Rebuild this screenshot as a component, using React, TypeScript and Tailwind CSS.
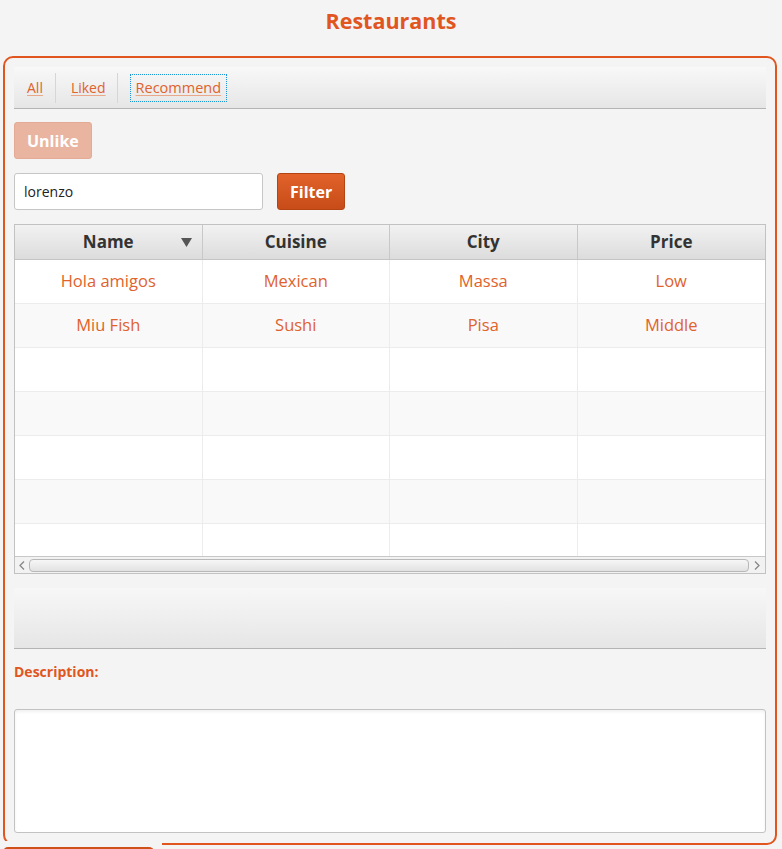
import React from 'react';

const font = { fontFamily: '"Open Sans", "Noto Sans", sans-serif' };

type Row = { name: string; cuisine: string; city: string; price: string };

const rows: Row[] = [
    { name: 'Hola amigos', cuisine: 'Mexican', city: 'Massa', price: 'Low' },
    { name: 'Miu Fish', cuisine: 'Sushi', city: 'Pisa', price: 'Middle' },
];

const columns = ['Name', 'Cuisine', 'City', 'Price'];

const Tabs: React.FC = () => (
    <div className="h-[42px] flex items-center px-[10px] bg-gradient-to-b from-[#f8f8f8] to-[#e6e6e6] border-b border-[#b4b4b4]">
        <button className="px-[3px] text-[14px] text-[#e0622c] underline underline-offset-2 decoration-[#eaa88a]">All</button>
        <div className="ml-[9px] mr-[10px] w-px h-[30px] bg-[#d6d6d6]" />
        <button className="px-[5px] text-[14px] text-[#e0622c] underline underline-offset-2 decoration-[#eaa88a]">Liked</button>
        <div className="ml-[6px] mr-[12px] w-px h-[30px] bg-[#d6d6d6]" />
        <button className="h-[28px] px-[5px] text-[14.5px] text-[#e0622c] underline underline-offset-2 decoration-[#eaa88a] border border-dotted border-[#1c95d8]">
            Recommend
        </button>
    </div>
);

const Table: React.FC = () => {
    const empty = Array.from({ length: 5 }, () => null);
    return (
        <div className="h-[350px] flex flex-col border border-[#c2c2c2] bg-white">
            <div className="h-[35px] grid grid-cols-4 bg-gradient-to-b from-[#f2f2f2] to-[#dcdcdc] border-b border-[#c4c4c4]">
                {columns.map((c, i) => (
                    <div key={c} className={`relative flex items-center justify-center text-[17px] font-bold text-[#333] ${i < 3 ? 'border-r border-[#c8c8c8]' : ''}`}>
                        {c}
                        {i === 0 && (
                            <svg className="absolute right-[10px] top-[13px]" width="11" height="9" viewBox="0 0 11 9">
                                <path d="M0 0 H11 L5.5 9 Z" fill="#555" />
                            </svg>
                        )}
                    </div>
                ))}
            </div>
            <div className="flex-1 overflow-hidden">
                {rows.map((r, i) => (
                    <div key={r.name} className={`h-[44px] grid grid-cols-4 border-b border-[#ececec] ${i % 2 ? 'bg-[#f9f9f9]' : 'bg-white'}`}>
                        {[r.name, r.cuisine, r.city, r.price].map((v, j) => (
                            <div key={j} className={`flex items-center justify-center text-[16.5px] text-[#e0622c] ${j < 3 ? 'border-r border-[#ececec]' : ''}`}>
                                {v}
                            </div>
                        ))}
                    </div>
                ))}
                {empty.map((_, i) => (
                    <div key={i} className={`h-[44px] grid grid-cols-4 border-b border-[#ececec] ${(i + rows.length) % 2 ? 'bg-[#f9f9f9]' : 'bg-white'}`}>
                        {[0, 1, 2, 3].map((j) => (
                            <div key={j} className={j < 3 ? 'border-r border-[#ececec]' : ''} />
                        ))}
                    </div>
                ))}
            </div>
            <div className="h-[17px] flex items-center bg-[#f2f2f2] border-t border-[#c8c8c8]">
                <svg className="mx-[4px]" width="6" height="9" viewBox="0 0 6 9">
                    <path d="M5 0.5 L1 4.5 L5 8.5" stroke="#888" strokeWidth="1.3" fill="none" />
                </svg>
                <div className="flex-1 h-[13px] rounded-[4px] border border-[#b8b8b8] bg-gradient-to-b from-[#f6f6f6] to-[#e2e2e2]" />
                <svg className="mx-[5px]" width="6" height="9" viewBox="0 0 6 9">
                    <path d="M1 0.5 L5 4.5 L1 8.5" stroke="#888" strokeWidth="1.3" fill="none" />
                </svg>
            </div>
        </div>
    );
};

const App: React.FC = () => {
    return (
        <div className="relative h-[849px] overflow-hidden bg-[#f4f4f4]" style={font}>
            <div className="h-[56px] flex items-start justify-center pt-[5px]">
                <h1 className="text-[21.5px] font-bold text-[#e0561e]">Restaurants</h1>
            </div>
            <div className="ml-[3px] w-[774px] h-[789px] rounded-[10px] border-2 border-[#e0561e] px-[9px] pt-[9px] flex flex-col">
                <Tabs />
                <div className="mt-[13px]">
                    <button className="h-[37px] px-[12px] rounded-[3px] bg-[#e9b5a0] border border-[#e3ab95] text-white text-[16px] font-bold">
                        Unlike
                    </button>
                </div>
                <div className="mt-[14px] flex items-center gap-[14px]">
                    <input
                        readOnly
                        value="lorenzo"
                        className="w-[249px] h-[37px] px-[9px] rounded-[3px] bg-white border border-[#c6c6c6] text-[14px] text-[#222] outline-none"
                    />
                    <button className="h-[37px] px-[12px] rounded-[3px] bg-gradient-to-b from-[#e2622a] to-[#c74c18] border border-[#b54414] text-white text-[16px] font-bold">
                        Filter
                    </button>
                </div>
                <div className="mt-[14px]">
                    <Table />
                </div>
                <div className="mt-[14px] h-[61px] bg-gradient-to-b from-[#f7f7f7] to-[#e6e6e6] border-b border-[#b4b4b4]" />
                <div className="mt-[12px] text-[14px] font-bold text-[#e0561e]">Description:</div>
                <textarea
                    readOnly
                    className="mt-[27px] h-[124px] w-full resize-none rounded-[3px] bg-white border border-[#c2c2c2] shadow-[inset_0_2px_3px_rgba(0,0,0,0.06)] outline-none"
                />
            </div>
            <div className="absolute left-0 top-[841px] w-[162px] h-[6px] bg-[#f4f4f4]" />
            <div className="absolute left-[3px] top-[847px] w-[151px] h-[10px] rounded-t-[5px] border-t-2 border-x-2 border-[#d0501a] bg-[#f4f4f4]" />
        </div>
    );
};

export default App;
